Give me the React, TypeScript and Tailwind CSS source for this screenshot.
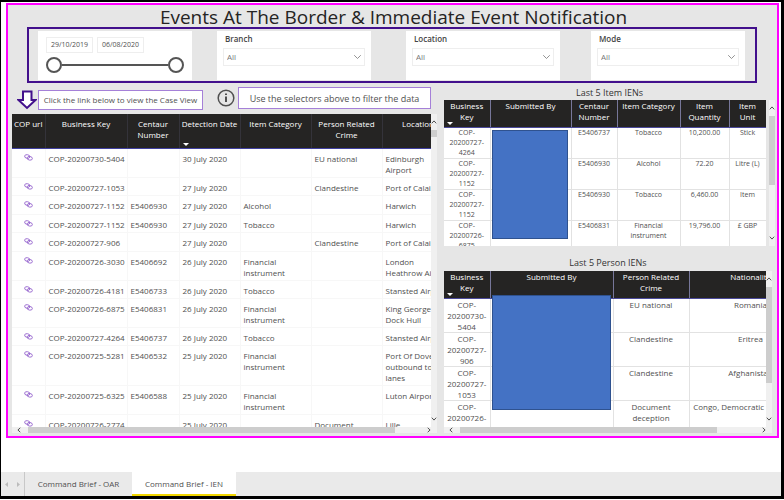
import React from "react";
import { ChevronDown } from "lucide-react";

type Row = string[];

const events: { h: string; cells: Row }[] = [
  { h: "h-[29px]", cells: ["COP-20200730-5404", "", "30 July 2020", "", "EU national", "Edinburgh\nAirport"] },
  { h: "h-[18px]", cells: ["COP-20200727-1053", "", "27 July 2020", "", "Clandestine", "Port of Calais"] },
  { h: "h-[19px]", cells: ["COP-20200727-1152", "E5406930", "27 July 2020", "Alcohol", "", "Harwich"] },
  { h: "h-[18px]", cells: ["COP-20200727-1152", "E5406930", "27 July 2020", "Tobacco", "", "Harwich"] },
  { h: "h-[19px]", cells: ["COP-20200727-906", "", "27 July 2020", "", "Clandestine", "Port of Calais"] },
  { h: "h-[29px]", cells: ["COP-20200726-3030", "E5406692", "26 July 2020", "Financial\ninstrument", "", "London\nHeathrow Airport"] },
  { h: "h-[18px]", cells: ["COP-20200726-4181", "E5406733", "26 July 2020", "Tobacco", "", "Stansted Airport"] },
  { h: "h-[29px]", cells: ["COP-20200726-6875", "E5406831", "26 July 2020", "Financial\ninstrument", "", "King George\nDock Hull"] },
  { h: "h-[18px]", cells: ["COP-20200727-4264", "E5406737", "26 July 2020", "Tobacco", "", "Stansted Airport"] },
  { h: "h-[40px]", cells: ["COP-20200725-5281", "E5406532", "25 July 2020", "Financial\ninstrument", "", "Port Of Dover\noutbound to\nlanes"] },
  { h: "h-[29px]", cells: ["COP-20200725-6325", "E5406588", "25 July 2020", "Financial\ninstrument", "", "Luton Airport"] },
  { h: "h-[29px]", cells: ["COP-20200726-2774", "", "25 July 2020", "", "Document\ndeception", "Lille"] },
];

const items: Row[] = [
  ["COP-\n20200727-\n4264", "", "E5406737", "Tobacco", "10,200.00", "Stick"],
  ["COP-\n20200727-\n1152", "", "E5406930", "Alcohol", "72.20", "Litre (L)"],
  ["COP-\n20200727-\n1152", "", "E5406930", "Tobacco", "6,460.00", "Item"],
  ["COP-\n20200726-\n6875", "", "E5406831", "Financial\ninstrument", "19,796.00", "£ GBP"],
];

const persons: Row[] = [
  ["COP-\n20200730-\n5404", "", "EU national", "Romania"],
  ["COP-\n20200727-\n906", "", "Clandestine", "Eritrea"],
  ["COP-\n20200727-\n1053", "", "Clandestine", "Afghanistan"],
  ["COP-\n20200726-\n2774", "", "Document\ndeception", "Congo, Democratic Republic of"],
];

function LinkIcon() {
  return (
    <svg viewBox="0 0 18 14" className="h-[7px] w-[9px]" fill="none" stroke="#9a6bd0" strokeWidth="1.8" aria-hidden="true">
      <ellipse cx="6.5" cy="5" rx="5.3" ry="3.6" transform="rotate(10 6.5 5)" />
      <ellipse cx="11.5" cy="8.6" rx="5.3" ry="3.6" transform="rotate(10 11.5 8.6)" />
    </svg>
  );
}

function Chevron({ className }: { className: string }) {
  return (
    <svg viewBox="0 0 6 4" className={"h-[4px] w-[6px] shrink-0 " + className} fill="none" stroke="#505050" aria-hidden="true">
      <path d="M.8 3.3 3 .9l2.2 2.4" />
    </svg>
  );
}

function SortMark() {
  return (
    <svg viewBox="0 0 6 3" className="absolute bottom-[2px] left-[3px] h-[3px] w-[6px]" fill="#fff" aria-hidden="true">
      <path d="M0 0h6L3 3z" />
    </svg>
  );
}

function VScroll({ thumb }: { thumb: string }) {
  return (
    <div className="flex w-[6px] shrink-0 flex-col items-center bg-[#f0f0f0] py-[6px]">
      <Chevron className="" />
      <div className={"mt-[6px] w-full bg-[#cdcdcd] " + thumb} />
      <Chevron className="mt-auto rotate-180" />
    </div>
  );
}

function HScroll({ thumb }: { thumb: string }) {
  return (
    <div className="flex h-[6px] items-center bg-[#f0f0f0] pr-[5px] pl-1">
      <Chevron className="-rotate-90" />
      <div className={"ml-[6px] h-full bg-[#cdcdcd] " + thumb} />
      <Chevron className="ml-auto rotate-90" />
    </div>
  );
}

function Slicer({ label }: { label: string }) {
  const id = "slicer-" + label.toLowerCase();
  return (
    <div className="h-[49px] w-[154px] bg-white px-[6px] pt-[2px]">
      <label htmlFor={id} className="block pl-[2px] text-[8px] leading-[12px] font-semibold text-[#444]">
        {label}
      </label>
      <div className="relative mt-[3px]">
        <select id={id} className="block h-[18px] w-[142px] appearance-none border border-[#eee] bg-white pl-[3px] text-[8px] leading-[16px] text-[#777]">
          <option>All</option>
        </select>
        <ChevronDown className="pointer-events-none absolute top-[3px] right-[1px] h-[12px] w-[13px] text-[#777]" strokeWidth={1.6} />
      </div>
    </div>
  );
}

function Cols({ widths }: { widths: string[] }) {
  return (
    <colgroup>
      {widths.map((w, i) => (
        <col key={i} className={w} />
      ))}
    </colgroup>
  );
}

function SideTable({ heads, widths, rows, width, rowHeight, text }: { heads: string[]; widths: string[]; rows: Row[]; width: string; rowHeight: string; text: string }) {
  return (
    <table className={"table-fixed border-collapse bg-white text-center text-[#505050] " + width + " " + text}>
      <Cols widths={widths} />
      <thead>
        <tr className="h-[27px] bg-[#252423] text-[8px] leading-[11px] text-white">
          {heads.map((h, i) => (
            <th key={h} className="relative border-r border-b border-r-[#77779a] border-b-[#4b4a9a] p-0 align-top font-medium whitespace-pre">
              {h}
              {i === 0 && <SortMark />}
            </th>
          ))}
        </tr>
      </thead>
      <tbody>
        {rows.map((r, i) => (
          <tr key={i} className={rowHeight}>
            {r.map((c, j) => (
              <td key={j} className="border-r border-b border-[#e2e2e2] p-0 align-top whitespace-pre">
                {c}
              </td>
            ))}
          </tr>
        ))}
      </tbody>
    </table>
  );
}

export default function App() {
  return (
    <div className="border-t-2 border-r-3 border-b-3 border-l border-black bg-white font-['Open_Sans','Noto_Sans',sans-serif] text-[#505050]">
      <main className="mt-[1px] mr-[2px] ml-[5px] h-[435px] border-2 border-[#f0f] bg-[#e6e6e6] pr-[2px] pl-[4px]">
        <h1 className="h-[22px] text-center text-[19px] leading-[24px] whitespace-nowrap text-[#252423]">
          Events At The Border &amp; Immediate Event Notification
        </h1>

        <section className="mr-[18px] ml-[15px] grid h-[56px] grid-cols-[179fr_189fr_185fr_154fr] items-center border-2 border-[#42108c] pr-[10px] pl-[9px]">
          <div className="h-[49px] w-[154px] bg-white px-[8px] pt-[6px]">
            <div className="flex gap-[4px]">
              <input aria-label="Start date" defaultValue="29/10/2019" className="h-[16px] w-[47px] border border-[#eee] text-center text-[7px]" />
              <input aria-label="End date" defaultValue="06/08/2020" className="h-[16px] w-[47px] border border-[#eee] text-center text-[7px]" />
            </div>
            <div className="mt-[4px] flex items-center">
              <button aria-label="Range start" className="size-[16px] shrink-0 rounded-full border-2 border-[#555] bg-white" />
              <div className="h-[2px] grow bg-[#555]" />
              <button aria-label="Range end" className="size-[16px] shrink-0 rounded-full border-2 border-[#555] bg-white" />
            </div>
          </div>
          <Slicer label="Branch" />
          <Slicer label="Location" />
          <Slicer label="Mode" />
        </section>

        <div className="flex gap-[7px]">
          <section className="w-[425px] shrink-0">
            <div className="flex h-[31px] items-start pt-[4px] pl-[5px]">
              <svg viewBox="0 0 20 20" className="mt-[3px] h-[20px] w-[20px]" fill="#fff" stroke="#42108c" strokeWidth="2" aria-hidden="true">
                <path d="M6 1.5h8.500v8.500h4L10 18 1.500 10H6z" />
              </svg>
              <p className="mt-[3px] ml-[1px] h-[20px] w-[165px] border border-[#a580d8] bg-white text-center text-[8px] leading-[18px] whitespace-nowrap">
                Click the link below to view the Case View
              </p>
              <svg viewBox="0 0 18 18" className="mt-[2px] ml-[14px] h-[18px] w-[18px]" fill="none" stroke="#505050" aria-hidden="true">
                <circle cx="9" cy="9" r="7.800" strokeWidth="1.500" />
                <path d="M9 7.500V13M9 4.500v1.600" strokeWidth="2" />
              </svg>
              <p className="ml-[3px] h-[22px] w-[193px] border border-[#a580d8] bg-white text-center text-[9px] leading-[21px] whitespace-nowrap">
                Use the selectors above to filter the data
              </p>
            </div>
            <div className="flex h-[313px]">
              <div className="w-[419px] overflow-hidden bg-white">
                <table className="w-[476px] table-fixed border-collapse text-[8px] leading-[11px]">
                  <Cols widths={["w-[33px]", "w-[82px]", "w-[52px]", "w-[61px]", "w-[71px]", "w-[71px]", "w-[106px]"]} />
                  <thead>
                    <tr className="h-[34px] bg-[#252423] text-white">
                      {["COP url", "Business Key", "Centaur\nNumber", "Detection Date", "Item Category", "Person Related\nCrime", "Location"].map((h, i) => (
                        <th key={h} className={"relative border-r border-b border-r-[#34333a] border-b-[#4040a0] p-0 pt-[4px] align-top font-medium whitespace-pre " + (i === 6 ? "pr-[34px]" : "")}>
                          {h}
                          {i === 3 && <SortMark />}
                        </th>
                      ))}
                    </tr>
                  </thead>
                  <tbody>
                    {events.map((e, i) => (
                      <tr key={i} className={e.h}>
                        <td className="border-r border-b border-[#f7f7f7] p-0 pt-[5px] align-top">
                          <a href="#case" aria-label={"Open " + e.cells[0]} className="flex justify-center">
                            <LinkIcon />
                          </a>
                        </td>
                        {e.cells.map((c, j) => (
                          <td key={j} className="border-r border-b border-[#f7f7f7] p-0 pt-[4px] pl-[3px] align-top whitespace-pre">
                            {c}
                          </td>
                        ))}
                      </tr>
                    ))}
                  </tbody>
                </table>
              </div>
              <VScroll thumb="h-[7px]" />
            </div>
            <HScroll thumb="w-[367px]" />
          </section>

          <section className="min-w-0 grow">
            <h2 className="h-[17px] pt-[3px] text-center text-[9px] leading-[13px] text-[#333]">Last 5 Item IENs</h2>
            <div className="relative flex h-[146px] justify-between">
              <div className="w-[322px] overflow-hidden">
                <SideTable
                  width="w-[322px]"
                  rowHeight="h-[31px]"
                  text="text-[7px] leading-[10px]"
                  heads={["Business\nKey", "Submitted By", "Centaur\nNumber", "Item Category", "Item\nQuantity", "Item\nUnit"]}
                  widths={["w-[46px]", "w-[81px]", "w-[46px]", "w-[63px]", "w-[49px]", "w-[37px]"]}
                  rows={items}
                />
              </div>
              <div className="absolute top-[30px] left-[48px] h-[109px] w-[76px] border border-[#2f528f] bg-[#4472c4]" />
              <VScroll thumb="h-[69px]" />
            </div>
            <div className="w-[328px]">
              <h2 className="h-[25px] pt-[10px] text-center text-[9px] leading-[13px] text-[#333]">Last 5 Person IENs</h2>
              <div className="relative flex h-[156px]">
                <div className="w-[322px] overflow-hidden">
                  <SideTable
                    width="w-[368px]"
                    rowHeight="h-[33px]"
                    text="text-[8px] leading-[11px]"
                    heads={["Business\nKey", "Submitted By", "Person Related\nCrime", "Nationality"]}
                    widths={["w-[46px]", "w-[123px]", "w-[76px]", "w-[123px]"]}
                    rows={persons}
                  />
                </div>
                <div className="absolute top-[24px] left-[48px] h-[115px] w-[119px] border border-[#2f528f] bg-[#4472c4]" />
                <VScroll thumb="h-[96px]" />
              </div>
              <HScroll thumb="w-[257px]" />
            </div>
          </section>
        </div>
      </main>

      <nav className="mt-[34px] flex h-[24px] bg-[#eaeaea] text-[8px]">
        <div className="flex w-[24px] items-center justify-around border-r border-[#c8c8c8]">
          <svg viewBox="0 0 3 5" className="h-[5px] w-[3px]" fill="#bbb" aria-hidden="true">
            <path d="M3 0v5L0 2.500z" />
          </svg>
          <svg viewBox="0 0 3 5" className="h-[5px] w-[3px]" fill="#bbb" aria-hidden="true">
            <path d="M0 0v5l3-2.500z" />
          </svg>
        </div>
        <button className="w-[107px] font-medium">Command Brief - OAR</button>
        <button className="w-[104px] border-b-2 border-[#f2d600] bg-white pt-[2px] font-medium">Command Brief - IEN</button>
      </nav>
    </div>
  );
}
